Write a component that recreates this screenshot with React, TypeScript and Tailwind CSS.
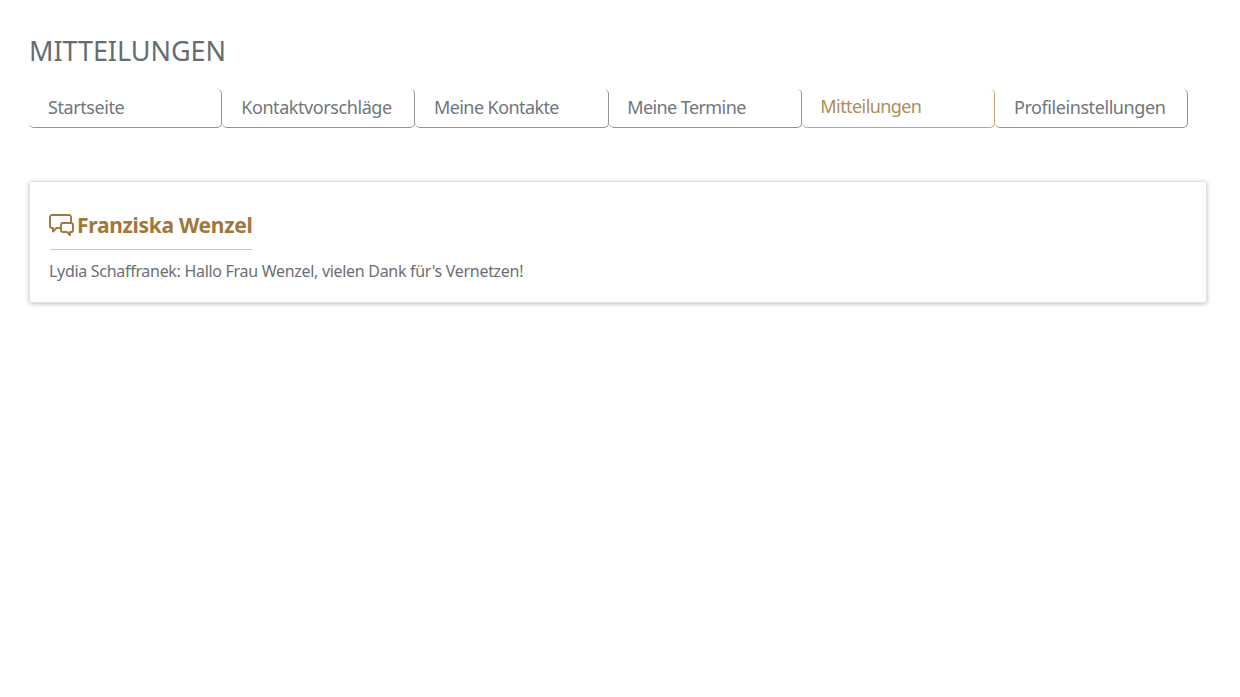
import React from "react";

const tabs = [
  { label: "Startseite", track: "tracking-[-0.42px] pl-[19px]" },
  { label: "Kontaktvorschläge", track: "tracking-[-0.42px] pl-[19px]" },
  { label: "Meine Kontakte", track: "tracking-[-0.58px] pl-[18.6px]" },
  { label: "Meine Termine", track: "tracking-[-0.58px] pl-[18.6px]" },
  { label: "Mitteilungen", track: "tracking-[-0.58px] pl-[18.6px]" },
  { label: "Profileinstellungen", track: "tracking-[-0.42px] pl-[19px]" },
];

export default function App() {
  return (
    <div className="min-h-[697px] bg-white pl-[29px] pr-[33px] pt-[33px] font-['Noto_Sans',sans-serif] text-[#6b7075]">
      <h1 className="text-[27px] leading-[36px] tracking-[-0.07px] text-[#666d70]">MITTEILUNGEN</h1>
      <nav className="mt-[20px] flex">
        {tabs.map((t) => {
          const active = t.label === "Mitteilungen";
          return (
            <div
              key={t.label}
              className={
                "flex h-[39px] w-[193.2px] items-center rounded-b-[5px] rounded-tr-[5px] border-r-[1.5px] border-b-[1.5px] text-[18px] " +
                t.track +
                " " +
                (active ? "border-[#c9a56d] pb-[3px] text-[#ae8d5a]" : "border-[#8f9498] pb-[1px] text-[#70767b]")
              }
            >
              {t.label}
            </div>
          );
        })}
      </nav>
      <section className="mt-[53px] h-[122px] w-[1178px] rounded-[3px] border border-[#e2e2e2] pl-[20px] pr-[19px] pt-[29px] shadow-[0_1px_4px_rgba(0,0,0,0.25)]">
        <div className="inline-block">
          <div className="flex items-center gap-[3px] border-b border-[#c8c8c8] pb-[10px]">
            <svg width="25" height="22" viewBox="0 0 25 22" fill="none" stroke="#a3763a" strokeWidth="1.9" strokeLinejoin="round" className="-ml-[1px]">
              <path d="M22 8V3a2 2 0 0 0-2-2H3a2 2 0 0 0-2 2v9a2 2 0 0 0 2 2h1v3.5L7.5 14H11" />
              <path d="M14 9h8a2 2 0 0 1 2 2v5a2 2 0 0 1-2 2h-1v3l-3-3h-4a2 2 0 0 1-2-2v-5a2 2 0 0 1 2-2z" />
            </svg>
            <span className="text-[21px] font-bold leading-[28px] tracking-[-0.3px] text-[#a3763a]">Franziska Wenzel</span>
          </div>
        </div>
        <p className="-ml-[1px] mt-[10px] text-[16px] leading-[22px] tracking-[-0.3px] text-[#6b6f73]">Lydia Schaffranek: Hallo Frau Wenzel, vielen Dank für's Vernetzen!</p>
      </section>
    </div>
  );
}
